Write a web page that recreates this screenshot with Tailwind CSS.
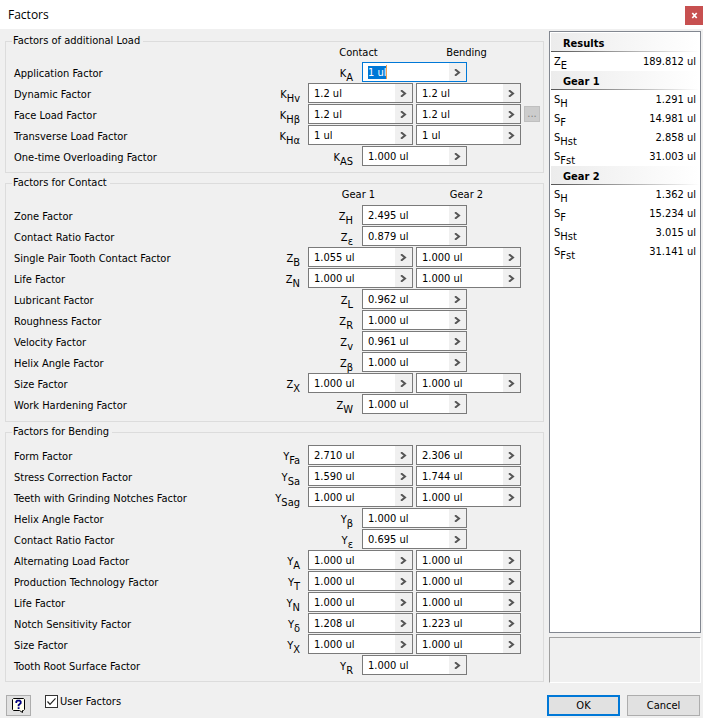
<!DOCTYPE html>
<html lang="en">
<head>
<meta charset="utf-8">
<meta name="viewport" content="width=device-width, initial-scale=1">
<title>Factors</title>
<script src="https://cdn.jsdelivr.net/npm/@tailwindcss/browser@4"></script>
</head>
<body class="flex min-h-screen flex-col bg-[#f0f0f0] font-['DejaVu_Sans_Condensed','DejaVu_Sans',sans-serif] text-[11px] leading-3 text-black">

<header class="flex h-[29px] shrink-0 items-center justify-between bg-white pl-2">
  <h1 class="font-['Open_Sans',sans-serif] text-xs">Factors</h1>
  <button type="button" aria-label="Close" class="mt-0.5 flex h-[19px] w-[18px] items-center justify-center bg-[#c75050]">
    <svg class="h-[7px] w-[7px]" viewBox="0 0 7 7" stroke="#fff" stroke-width="1.7"><path d="M1.3 1l4.4 5M5.7 1L1.3 6"/></svg>
  </button>
</header>

<main class="flex flex-1 gap-[5px] pl-[5px] pr-0.5">
  <form id="factors" class="flex min-w-0 flex-1 flex-col gap-1 pt-[6px]">
    <fieldset class="border border-[#dcdcdc] pb-[5px] pl-2">
      <legend class="-ml-0.5 pl-px pr-[3px]">Factors of additional Load</legend>
      <div class="flex h-[15px] justify-end gap-[3px] pr-6 text-center">
        <span class="w-[105px]">Contact</span><span class="w-[105px]">Bending</span>
      </div>
      <div data-group="load"></div>
    </fieldset>
    <fieldset class="border border-[#dcdcdc] pb-[6px] pl-2">
      <legend class="-ml-0.5 pl-px pr-[3px]">Factors for Contact</legend>
      <div class="flex h-4 justify-end gap-[3px] pr-6 text-center">
        <span class="w-[105px]">Gear 1</span><span class="w-[105px]">Gear 2</span>
      </div>
      <div data-group="contact"></div>
    </fieldset>
    <fieldset class="border border-[#dcdcdc] pb-[5px] pl-2">
      <legend class="-ml-0.5 pl-px pr-[3px]">Factors for Bending</legend>
      <div data-group="bending" class="pt-[7px]"></div>
    </fieldset>
  </form>

  <aside class="flex w-[152px] shrink-0 flex-col gap-1 pt-0.5">
    <section class="flex-1 border border-[#828790] bg-white p-px">
      <table class="w-full border-collapse" aria-label="Results">
        <tbody id="results"></tbody>
      </table>
    </section>
    <div class="h-[46px] border border-[#a0a0a0] border-r-white border-b-white"></div>
  </aside>
</main>

<footer class="flex shrink-0 items-start pb-0.5 pl-[6px] pr-[3px] pt-3">
  <button type="button" aria-label="Help" class="flex h-[21px] w-[25px] items-center justify-center border border-[#adadad] bg-[#e1e1e1]">
    <svg class="h-[15px] w-[13px]" viewBox="0 0 13 15">
      <path d="M1.5.5h10l1 1v10l-1 1h-1v2l-3-2h-6l-1-1v-10z" fill="#fffff0" stroke="#000"/>
      <path d="M4.3 5V3.6L5.2 2.7h2.6l.9.9v1.5L6.6 7.1v1.2M6.6 9.3v1.7" fill="none" stroke="#000080" stroke-width="1.8"/>
    </svg>
  </button>
  <label class="ml-[14px] flex items-center gap-0.5">
    <span class="grid">
      <input type="checkbox" checked class="peer col-start-1 row-start-1 h-[13px] w-[13px] appearance-none border border-[#333] bg-white">
      <svg class="pointer-events-none invisible col-start-1 row-start-1 h-[13px] w-[13px] peer-checked:visible" viewBox="0 0 13 13" fill="none" stroke="#222" stroke-width="1.2"><path d="M2.5 6.5L5 9.3l5.5-6"/></svg>
    </span>
    <span class="pt-px">User Factors</span>
  </label>
  <div class="ml-auto flex gap-[7px]">
    <button type="submit" form="factors" class="h-[21px] w-[73px] border-2 border-[#0078d7] bg-[#e1e1e1]">OK</button>
    <button type="button" class="h-[21px] w-[73px] border border-[#adadad] bg-[#e1e1e1]">Cancel</button>
  </div>
</footer>

<script>
// [label, symbol, subscript, value, second value]
const groups = {
  load: [
    ['Application Factor', 'K', 'A', '1 ul'],
    ['Dynamic Factor', 'K', 'Hv', '1.2 ul', '1.2 ul'],
    ['Face Load Factor', 'K', 'Hβ', '1.2 ul', '1.2 ul'],
    ['Transverse Load Factor', 'K', 'Hα', '1 ul', '1 ul'],
    ['One-time Overloading Factor', 'K', 'AS', '1.000 ul'],
  ],
  contact: [
    ['Zone Factor', 'Z', 'H', '2.495 ul'],
    ['Contact Ratio Factor', 'Z', 'ε', '0.879 ul'],
    ['Single Pair Tooth Contact Factor', 'Z', 'B', '1.055 ul', '1.000 ul'],
    ['Life Factor', 'Z', 'N', '1.000 ul', '1.000 ul'],
    ['Lubricant Factor', 'Z', 'L', '0.962 ul'],
    ['Roughness Factor', 'Z', 'R', '1.000 ul'],
    ['Velocity Factor', 'Z', 'v', '0.961 ul'],
    ['Helix Angle Factor', 'Z', 'β', '1.000 ul'],
    ['Size Factor', 'Z', 'X', '1.000 ul', '1.000 ul'],
    ['Work Hardening Factor', 'Z', 'W', '1.000 ul'],
  ],
  bending: [
    ['Form Factor', 'Y', 'Fa', '2.710 ul', '2.306 ul'],
    ['Stress Correction Factor', 'Y', 'Sa', '1.590 ul', '1.744 ul'],
    ['Teeth with Grinding Notches Factor', 'Y', 'Sag', '1.000 ul', '1.000 ul'],
    ['Helix Angle Factor', 'Y', 'β', '1.000 ul'],
    ['Contact Ratio Factor', 'Y', 'ε', '0.695 ul'],
    ['Alternating Load Factor', 'Y', 'A', '1.000 ul', '1.000 ul'],
    ['Production Technology Factor', 'Y', 'T', '1.000 ul', '1.000 ul'],
    ['Life Factor', 'Y', 'N', '1.000 ul', '1.000 ul'],
    ['Notch Sensitivity Factor', 'Y', 'δ', '1.208 ul', '1.223 ul'],
    ['Size Factor', 'Y', 'X', '1.000 ul', '1.000 ul'],
    ['Tooth Root Surface Factor', 'Y', 'R', '1.000 ul'],
  ],
};
const field = (id, value, name) => `
  <span class="flex h-5 w-[105px] shrink-0 border border-[#7a7a7a] bg-white focus-within:border-[#0078d7]">
    <span class="flex min-w-0 flex-1 items-center pl-[5px]">
      <input id="${id}" type="text" value="${value}" ${name ? `aria-label="${name}"` : ''} class="peer h-[14px] max-w-full [field-sizing:content] outline-none selection:bg-[#0078d7] selection:text-white">
      <span class="hidden h-[14px] w-px bg-[#f0a050] peer-focus:block"></span>
    </span>
    <button type="button" aria-label="Value options" class="flex w-[17px] items-center justify-center bg-[#f0f0f0]">
      <svg class="h-[7px] w-[7px]" viewBox="0 0 7 7" fill="none" stroke="#555" stroke-width="2"><path d="M1 .3L5 3.5 1 6.7"/></svg>
    </button>
  </span>`;
for (const [key, rows] of Object.entries(groups)) {
  document.querySelector(`[data-group=${key}]`).innerHTML = rows.map(([label, sym, sub, a, b], i) => {
    const id = `${key}-${i}`;
    const more = sub === 'Hβ' ? '<button type="button" disabled aria-label="Details" class="h-4 w-4 shrink-0 border border-[#bfbfbf] bg-[#ccc] text-[#838383]">...</button>' : '';
    return `
    <div class="flex h-[21px] items-start">
      <label for="${id}" class="flex-1 pt-[6px]">${label}</label>
      <span class="flex pt-[6px] ${b ? 'pr-2' : 'pr-[9px]'}"><span>${sym}</span><span class="pt-1">${sub}</span></span>
      <span class="flex items-center gap-[3px] ${b ? 'w-[235px]' : 'w-[181px]'}">${field(id, a)}${b ? field(id + 'b', b, label + ', second value') : ''}${more}</span>
    </div>`;
  }).join('');
}

const results = [
  ['Results'], ['Z', 'E', '189.812 ul'],
  ['Gear 1'], ['S', 'H', '1.291 ul'], ['S', 'F', '14.981 ul'], ['S', 'Hst', '2.858 ul'], ['S', 'Fst', '31.003 ul'],
  ['Gear 2'], ['S', 'H', '1.362 ul'], ['S', 'F', '15.234 ul'], ['S', 'Hst', '3.015 ul'], ['S', 'Fst', '31.141 ul'],
];
document.getElementById('results').innerHTML = results.map(([a, sub, value]) => value
  ? `<tr class="h-[19px] align-top"><th scope="row" class="p-0 pl-[3px] pt-1 text-left font-normal"><span class="flex h-[15px]"><span>${a}</span><span class="pt-1">${sub}</span></span></th><td class="p-0 pr-[3px] pt-1 text-right">${value}</td></tr>`
  : `<tr class="h-[19px]"><th colspan="2" class="p-0 text-left font-bold"><div class="h-[18px] bg-linear-to-r from-[#ececec] to-white pl-3 pt-[5px]">${a}</div><div class="h-px bg-linear-to-r from-[#555] to-white"></div></th></tr>`
).join('');

const first = document.getElementById('load-0');
first.focus();
first.select();
</script>
</body>
</html>
